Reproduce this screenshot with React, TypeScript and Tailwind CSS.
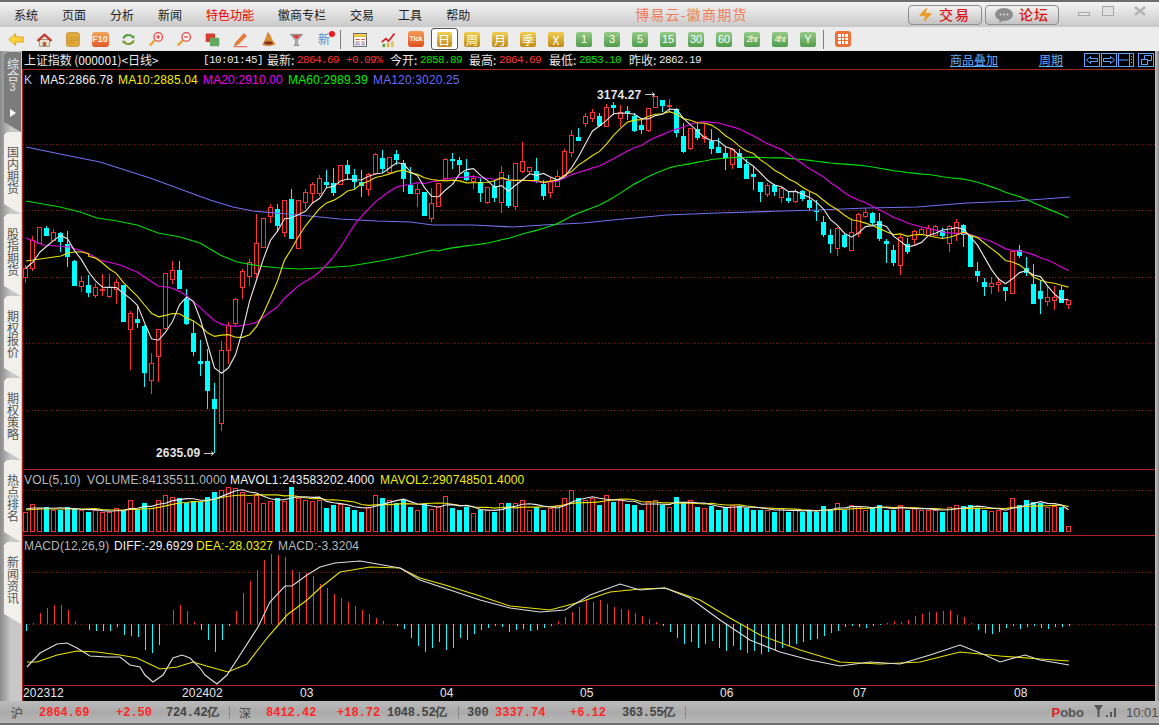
import { Zap } from "lucide-react";

type Candle = ["r" | "c", number, number, number, number];

const CJK = "font-['Noto_Sans_CJK_SC','Liberation_Sans',sans-serif]";
const RED = "#ff3232";
const CYAN = "#00ffff";

// kind, high, body top, body bottom, low (page pixels)
const candles: Candle[] = [
  ["r",265,268,277,283],["r",236,240,268,271],["r",227,227,243,243],["c",226,228,236,236],["r",229,232,240,240],
  ["c",232,233,242,252],["c",231,244,257,267],["c",260,261,286,286],["r",276,281,286,292],["c",275,285,293,297],
  ["r",283,287,295,298],["r",274,289,290,296],["r",274,287,296,298],["r",279,282,289,304],["c",285,285,322,322],
  ["r",311,313,329,370],["c",305,319,323,328],["c",325,326,373,387],["r",353,363,380,394],["r",329,329,356,382],
  ["r",273,273,328,330],["r",261,270,279,284],["c",261,270,289,289],["c",289,299,324,325],["c",321,333,352,356],
  ["c",340,361,364,376],["c",349,361,391,409],["c",383,399,409,453],["r",341,350,423,431],["r",322,325,350,364],
  ["r",298,299,323,326],["r",269,271,287,299],["r",259,262,276,286],["r",214,243,273,278],["r",218,218,247,248],
  ["r",204,207,216,223],["c",204,209,226,232],["r",200,200,232,237],["c",189,199,239,239],["r",200,200,248,248],
  ["r",189,192,202,209],["r",182,184,193,204],["r",175,178,193,196],["c",170,182,185,188],["c",168,183,193,196],
  ["r",165,165,184,184],["c",160,165,174,180],["c",169,175,182,189],["c",170,182,186,197],["r",173,174,189,196],
  ["r",153,154,173,173],["c",150,158,169,173],["r",157,157,172,173],["c",150,154,160,165],["c",160,163,179,192],
  ["c",167,185,194,194],["r",184,189,193,207],["c",192,192,216,216],["r",188,203,218,222],["r",183,183,206,206],
  ["r",158,159,178,178],["c",153,159,161,169],["c",157,160,165,173],["c",159,172,180,181],["r",175,178,181,189],
  ["c",178,182,193,202],["r",187,187,202,204],["c",180,186,198,202],["r",166,172,202,213],["c",175,181,206,208],
  ["r",163,163,206,210],["r",142,161,171,173],["r",167,167,171,175],["c",158,171,180,183],["c",180,184,196,200],
  ["r",177,181,192,198],["r",170,176,186,186],["r",149,151,175,175],["r",130,135,152,157],["c",128,137,141,141],
  ["r",113,116,123,127],["r",109,112,118,122],["c",113,116,126,127],["r",104,107,126,126],["c",102,105,108,115],
  ["r",105,112,118,127],["c",106,111,113,120],["c",113,116,131,132],["c",120,125,130,134],["r",108,108,130,132],
  ["r",96,96,107,107],["c",100,100,106,112],["r",99,105,106,112],["c",108,109,133,137],["c",123,136,152,153],
  ["r",128,128,148,150],["c",123,129,138,140],["r",124,136,138,143],["c",129,141,149,154],["c",138,147,153,153],
  ["c",146,153,158,170],["r",148,149,164,169],["c",149,153,168,168],["c",159,164,179,179],["c",167,174,177,190],
  ["c",182,182,192,202],["r",183,185,194,197],["c",184,185,192,196],["r",187,188,197,203],["c",192,198,201,203],
  ["r",189,191,201,203],["c",190,191,199,201],["c",192,200,208,210],["c",200,211,212,221],["c",216,222,235,237],
  ["c",229,235,244,253],["r",227,228,248,256],["c",234,235,247,248],["r",218,232,250,250],["r",213,214,233,237],
  ["r",208,212,216,218],["c",212,213,223,225],["c",213,221,239,241],["c",239,241,244,263],["c",245,250,263,266],
  ["r",235,237,265,275],["c",238,244,252,254],["r",230,231,239,245],["r",227,229,234,235],["r",225,228,235,236],
  ["r",225,226,235,236],["c",228,231,236,238],["r",225,226,243,252],["r",219,222,233,241],["c",224,225,235,247],
  ["c",235,235,267,267],["c",262,271,276,282],["c",278,282,287,296],["r",277,283,286,294],["r",277,282,284,292],
  ["c",287,287,291,301],["r",251,251,293,293],["c",245,250,256,258],["c",257,268,273,276],["c",264,284,304,304],
  ["c",280,291,299,314],["r",285,297,301,306],["r",286,297,300,310],["c",286,290,303,303],["r",300,300,304,309],
];

// tops of the volume bars (page pixels), bottom edge is y=532
const volumeTops = [
  512,504,508,507,510,510,507,509,510,512,510,512,512,508,511,500,510,503,508,500,
  495,497,498,503,501,502,497,492,490,487,488,492,503,495,503,501,498,501,487,498,
  500,501,500,508,505,504,507,510,512,507,495,498,500,503,500,507,510,504,509,506,
  496,508,510,507,513,510,510,512,503,503,503,500,510,507,510,508,505,498,490,498,
  500,498,505,495,502,500,504,505,510,501,500,505,507,497,503,500,507,508,506,510,
  507,505,506,508,510,510,510,512,508,512,510,512,510,512,506,509,503,510,505,506,
  510,508,505,510,510,505,510,508,510,510,510,512,507,505,506,505,508,510,511,510,
  512,498,505,500,502,503,507,506,507,526,
];

// MACD stick length above (+) or below (-) the zero line, in pixels
const macdSticks = [
  -7,1,11,16,19,19,14,3,0,-6,-7,-7,-7,-3,-11,-12,-13,-26,-29,-21,
  0,14,19,13,2,-6,-16,-28,-16,-2,13,31,43,54,64,70,69,67,54,52,
  51,48,40,36,30,26,22,18,14,10,6,3,0,-2,-5,-14,-22,-28,-24,-18,
  -26,-24,-14,-16,-10,-6,-4,-2,-3,-8,-6,-5,-7,-6,-4,-2,3,7,12,17,
  24,22,24,20,17,15,14,11,8,5,2,-2,-8,-14,-20,-18,-24,-20,-17,-24,
  -27,-22,-26,-29,-27,-30,-28,-26,-24,-22,-20,-18,-16,-15,-12,-9,-7,-3,-2,-3,
  -4,-2,-1,1,3,2,4,8,10,12,12,13,14,9,7,1,-6,-9,-10,-8,
  -4,-2,-5,-3,-2,-4,-5,-3,-3,-2,
];

const closes = candles.map((c) => (c[0] === "r" ? c[2] : c[3]));
const xOf = (i: number) => 25.5 + 7 * i;

function movingAverage(values: number[], n: number, lead: [number, number][]) {
  const pts: [number, number][] = [...lead];
  for (let i = n - 1; i < values.length; i++) {
    const slice = values.slice(i - n + 1, i + 1);
    pts.push([xOf(i), slice.reduce((a, b) => a + b, 0) / n]);
  }
  return pts;
}

const toPoints = (pts: [number, number][]) => pts.map((p) => p.join(",")).join(" ");

const ma5 = movingAverage(closes, 5, [[26, 268], [33, 262], [40, 252], [47, 246]]);
const ma10 = movingAverage(closes, 10, [[26, 261], [40, 259], [54, 257], [61, 256], [68, 253], [75, 252], [82, 252], [89, 254]]);
const ma20 = movingAverage(closes, 20, [[26, 238], [43, 245], [70, 247], [87, 253], [100, 260], [120, 265], [137, 272], [152, 282]]);
const ma60 = movingAverage(closes, 60, [
  [26, 201], [60, 207], [80, 212], [97, 218], [117, 221], [137, 225], [158, 233], [180, 237], [200, 243], [220, 255],
  [237, 262], [260, 266], [280, 268], [300, 269], [320, 268], [350, 266], [380, 261], [410, 255], [432, 250],
]);
const ma120: [number, number][] = [
  [26, 147], [60, 154], [100, 162], [150, 178], [180, 189], [210, 200], [233, 207], [253, 211], [287, 214], [320, 217],
  [340, 219], [377, 221], [410, 222], [433, 225], [473, 225], [513, 227], [543, 225], [583, 223], [623, 219], [667, 215],
  [717, 213], [783, 211], [817, 210], [867, 208], [917, 207], [967, 203], [1017, 201], [1057, 198], [1070, 197],
];

const volMa5 = movingAverage(volumeTops, 5, [[26, 509], [33, 508], [40, 508], [47, 508]]);
const volMa10 = movingAverage(volumeTops, 10, [[26, 510], [40, 509], [54, 509], [68, 509], [82, 509]]);

const diff: [number, number][] = [
  [27, 667], [40, 653], [57, 644], [67, 643], [77, 648], [90, 656], [107, 657], [120, 657], [130, 665], [140, 667],
  [145, 675], [153, 682], [163, 675], [173, 658], [182, 655], [190, 658], [200, 668], [205, 675], [217, 684], [227, 675],
  [240, 655], [258, 627], [270, 602], [285, 586], [292, 586], [307, 575], [320, 567], [335, 563], [360, 561], [400, 568],
  [420, 580], [450, 590], [480, 600], [510, 608], [540, 612], [565, 610], [590, 595], [620, 584], [640, 590], [665, 588],
  [690, 598], [720, 620], [750, 640], [780, 652], [810, 660], [840, 666], [870, 662], [900, 664], [930, 655], [960, 645],
  [985, 655], [1000, 662], [1025, 655], [1040, 660], [1069, 665],
];
const dea: [number, number][] = [
  [27, 662], [37, 662], [57, 655], [77, 651], [97, 652], [120, 655], [137, 658], [160, 669], [177, 667], [193, 662],
  [210, 667], [228, 672], [247, 664], [267, 638], [287, 615], [307, 600], [320, 588], [340, 572], [370, 567], [400, 568],
  [420, 578], [445, 585], [480, 596], [510, 606], [550, 610], [580, 602], [610, 592], [640, 589], [665, 588], [700, 600],
  [730, 618], [760, 635], [800, 650], [840, 662], [880, 664], [920, 662], [960, 652], [1000, 656], [1040, 659], [1069, 661],
];

function Grid({ ys }: { ys: number[] }) {
  return (
    <>
      {ys.map((y) => (
        <line key={y} x1={23} x2={1155} y1={y + 0.5} y2={y + 0.5} stroke="#8a1414" strokeDasharray="1 2" />
      ))}
    </>
  );
}

function Line({ pts, color }: { pts: [number, number][]; color: string }) {
  return <polyline points={toPoints(pts)} fill="none" stroke={color} strokeWidth={1.15} />;
}

function PriceChart() {
  return (
    <svg width={1132} height={399} viewBox="23 70 1132 399" className="block">
      <Grid ys={[144, 210, 277, 343, 410]} />
      <g shapeRendering="crispEdges">
        {candles.map((c, i) => {
          const x = xOf(i);
          const color = c[0] === "r" ? RED : CYAN;
          return (
            <g key={i}>
              <line x1={x} x2={x} y1={c[1]} y2={c[4]} stroke={color} />
              {c[0] === "r" ? (
                <rect x={x - 2} y={c[2] + 0.5} width={4} height={Math.max(c[3] - c[2], 1)} fill="#000" stroke={color} />
              ) : (
                <rect x={x - 2.5} y={c[2]} width={5} height={Math.max(c[3] - c[2], 1)} fill={color} />
              )}
            </g>
          );
        })}
      </g>
      <Line pts={ma120} color="#7070f0" />
      <Line pts={ma60} color="#00e000" />
      <Line pts={ma20} color="#e000e0" />
      <Line pts={ma10} color="#e8e000" />
      <Line pts={ma5} color="#e4e4e4" />
      <path d="M645 94.5h10m-3-2 3 2-3 2" fill="none" stroke="#c8c8c8" />
      <path d="M204 453.5h10m-3-2 3 2-3 2" fill="none" stroke="#c8c8c8" />
    </svg>
  );
}

function VolumeChart() {
  return (
    <svg width={1132} height={65} viewBox="23 470 1132 65" className="block">
      <Grid ys={[490]} />
      <g shapeRendering="crispEdges">
        {volumeTops.map((top, i) => {
          const x = xOf(i);
          return candles[i][0] === "r" ? (
            <rect key={i} x={x - 2} y={top + 0.5} width={4} height={531 - top} fill="#000" stroke={RED} />
          ) : (
            <rect key={i} x={x - 2.5} y={top} width={5} height={532 - top} fill={CYAN} />
          );
        })}
      </g>
      <Line pts={volMa10} color="#e8e000" />
      <Line pts={volMa5} color="#e8e8e8" />
    </svg>
  );
}

function MacdChart() {
  return (
    <svg width={1132} height={149} viewBox="23 536 1132 149" className="block">
      <Grid ys={[572, 624]} />
      <g shapeRendering="crispEdges">
        {macdSticks.map((v, i) =>
          v === 0 ? null : (
            <line
              key={i}
              x1={xOf(i) + 1}
              x2={xOf(i) + 1}
              y1={624}
              y2={624 - v}
              stroke={v > 0 ? RED : CYAN}
            />
          ),
        )}
      </g>
      <Line pts={dea} color="#e8e000" />
      <Line pts={diff} color="#dcdcdc" />
    </svg>
  );
}

function Tab({ label }: { label: string }) {
  return (
    <div className="w-[17px] h-[82px] ml-[4px] flex flex-col items-center pt-[14px] bg-[#f1f0ea] text-[#555] [clip-path:polygon(3px_0,100%_0,100%_100%,0_calc(100%-10px),0_3px)]">
      <span className={`${CJK} text-[12px] leading-[12px] [writing-mode:vertical-rl]`}>{label}</span>
    </div>
  );
}

function ActiveTab() {
  return (
    <div className="w-[17px] h-[80px] ml-[4px] flex flex-col items-center pt-[6px] bg-[#7c7c7c] text-[#e8e8e8] [clip-path:polygon(3px_0,100%_0,100%_100%,0_calc(100%-10px),0_3px)]">
      <span className={`${CJK} text-[12px] leading-[12px] [writing-mode:vertical-rl]`}>综合</span>
      <span className="font-['Liberation_Sans',sans-serif] text-[11px] leading-[11px]">3</span>
      <svg width={6} height={8} viewBox="0 0 6 8" className="mt-[16px] ml-[1px]">
        <path d="M0 0l6 4-6 4z" fill="#fff" />
      </svg>
    </div>
  );
}

function GoldBtn({ label }: { label: string }) {
  return (
    <div className="w-7 flex justify-center">
      <span
        className={`${CJK} w-[16px] h-[15px] rounded-[2px] bg-gradient-to-b from-[#f0cf50] to-[#bf8a12] text-white text-[12px] leading-[15px] text-center`}
      >
        {label}
      </span>
    </div>
  );
}

function GreenBtn({ label }: { label: string }) {
  const small = label.length > 2;
  return (
    <div className="w-7 flex justify-center">
      <span
        className={`w-[16px] h-[15px] rounded-[2px] bg-gradient-to-b from-[#96cb88] to-[#4f9c4c] text-white leading-[15px] text-center font-['Liberation_Sans',sans-serif] whitespace-nowrap ${
          small ? "text-[9px] tracking-[-0.6px]" : "text-[11px]"
        }`}
      >
        {label}
      </span>
    </div>
  );
}

function Ico({ children }: { children: React.ReactNode }) {
  return (
    <div className="w-7 flex justify-center">
      <svg width={17} height={17} viewBox="0 0 20 20">
        {children}
      </svg>
    </div>
  );
}

function Toolbar() {
  return (
    <div className="h-[24px] bg-[#ececec] flex items-center pl-[2px] shrink-0">
      <Ico>
        <path d="M1 10 9 3v4h9v6H9v4z" fill="#fcd23e" stroke="#d99b10" />
      </Ico>
      <Ico>
        <path d="M4 10h12v8H4z" fill="#e8e0d0" stroke="#a08060" />
        <path d="M8 18v-5h4v5z" fill="#b06030" />
        <path d="M1 11 10 3l9 8-2 1-7-6-7 6z" fill="#d8352a" stroke="#902010" strokeWidth="0.5" />
      </Ico>
      <Ico>
        <rect x="3" y="2" width="15" height="16" rx="2" fill="#e2a93c" stroke="#c08a2a" />
        <path d="M5 8h11M5 11h11M5 14h8" stroke="#c8962e" />
      </Ico>
      <div className="w-7 flex justify-center">
        <span className="w-[17px] h-[15px] rounded-[3px] bg-gradient-to-b from-[#f3a45c] to-[#e0582a] text-[#fff0d8] text-[9px] font-bold leading-[15px] text-center font-['Liberation_Sans',sans-serif]">
          F10
        </span>
      </div>
      <Ico>
        <path d="M4 9a6 5 0 0 1 11-2" fill="none" stroke="#5aa048" strokeWidth="2.5" />
        <path d="M16 11a6 5 0 0 1-11 2" fill="none" stroke="#7a9a30" strokeWidth="2.5" />
        <path d="M13 8l4 1 0-4z" fill="#5aa048" />
        <path d="M7 12l-4-1 0 4z" fill="#7a9a30" />
      </Ico>
      <Ico>
        <circle cx="12" cy="7" r="5" fill="#fff4f0" stroke="#e0484a" strokeWidth="1.5" />
        <path d="M9.5 7h5M12 4.5v5" stroke="#e0484a" strokeWidth="1.5" />
        <path d="M8 11l-6 6" stroke="#eea020" strokeWidth="2.5" />
      </Ico>
      <Ico>
        <circle cx="12" cy="7" r="5" fill="#fff4f0" stroke="#e0484a" strokeWidth="1.5" />
        <path d="M9.5 7h5" stroke="#e0484a" strokeWidth="1.5" />
        <path d="M8 11l-6 6" stroke="#eea020" strokeWidth="2.5" />
      </Ico>
      <Ico>
        <rect x="2" y="3" width="11" height="10" rx="1" fill="#d83a30" />
        <rect x="7" y="8" width="11" height="10" rx="1" fill="#62a860" />
      </Ico>
      <Ico>
        <path d="M4 14 14 3l3 3L7 16l-4 1z" fill="#ee7a30" stroke="#c84a20" strokeWidth="0.6" />
        <path d="M2 18.5h16" stroke="#e03a20" />
      </Ico>
      <Ico>
        <path d="M9 2c2 0 3 3 4 6s3 6 5 7c-4 3-11 3-15 1 2-3 4-7 6-14z" fill="#d89030" stroke="#a86020" strokeWidth="0.5" />
        <ellipse cx="10" cy="14" rx="5" ry="2" fill="#8a3020" />
      </Ico>
      <Ico>
        <path d="M3 4h14l-6 7v4l2 2H7l2-2v-4z" fill="#c8c8c8" stroke="#777" />
        <path d="M5 5h10l-5 5z" fill="#d83a3a" />
      </Ico>
      <div className="w-7 relative flex justify-center">
        <span className={`${CJK} text-[12px] leading-[20px] text-[#4a90d8]`}>新</span>
        <span className="absolute right-[3px] top-[2px] w-[6px] h-[6px] rounded-full bg-[#f01818]" />
      </div>
      <div className="w-px h-[19px] bg-[#808080] ml-[2px] mr-[5px]" />
      <Ico>
        <rect x="2" y="3" width="15" height="15" fill="#fff" stroke="#444" />
        <path d="M2 5.5h15" stroke="#f0c030" strokeWidth="3" />
        <path d="M4 10h5M11 10h4M4 13h5M11 13h4" stroke="#d03030" />
        <path d="M4 15.5h5M11 15.5h4" stroke="#2050c0" />
      </Ico>
      <Ico>
        <path d="M2 13l5-4 3 3 7-9" fill="none" stroke="#d82020" strokeWidth="2" />
        <path d="M3 15h3v4H3z" fill="#60a040" />
        <path d="M8 14h3v5H8z" fill="#e0b030" />
        <path d="M13 12h3v7h-3z" fill="#e8c050" />
      </Ico>
      <div className="w-7 flex justify-center">
        <span className="w-[16px] h-[16px] rounded-[3px] bg-gradient-to-b from-[#f49a50] to-[#e04c20] text-white text-[7px] font-bold leading-[16px] font-['Liberation_Sans',sans-serif] text-center tracking-[-0.2px]">
          Tick
        </span>
      </div>
      <div className="w-7 flex justify-center">
        <div className="w-[27px] h-[22px] border border-[#555] rounded-[3px] bg-white flex items-center justify-center">
          <span
            className={`${CJK} w-[15px] h-[15px] rounded-[2px] bg-gradient-to-b from-[#f0cf50] to-[#bf8a12] text-white text-[12px] leading-[15px] text-center`}
          >
            日
          </span>
        </div>
      </div>
      <GoldBtn label="周" />
      <GoldBtn label="月" />
      <GoldBtn label="季" />
      <GoldBtn label="X" />
      {["1", "3", "5", "15", "30", "60", "2hr", "4hr", "Y"].map((t) => (
        <GreenBtn key={t} label={t} />
      ))}
      <div className="w-px h-[19px] bg-[#808080] ml-[1px] mr-[5px]" />
      <div className="w-7 flex justify-center">
        <svg width={16} height={16} viewBox="0 0 16 16">
          <rect width="16" height="16" rx="3" fill="#ee7038" />
          <rect x="3" y="3" width="10" height="10" fill="#fff" />
          <path d="M3 6.5h10M3 9.5h10M6.5 3v10M9.5 3v10" stroke="#ee7038" />
        </svg>
      </div>
    </div>
  );
}

function MenuBar() {
  const items = ["系统", "页面", "分析", "新闻", "特色功能", "徽商专栏", "交易", "工具", "帮助"];
  return (
    <div className="h-[25px] bg-gradient-to-b from-[#f4f4f4] to-[#c9c9c9] flex items-center shrink-0 relative">
      <div className={`${CJK} pl-[14px] flex gap-6 text-[12px] text-[#222]`}>
        {items.map((m) => (
          <span key={m} className={m === "特色功能" ? "text-[#f00000]" : ""}>
            {m}
          </span>
        ))}
      </div>
      <span className={`${CJK} ml-[165px] text-[14px] tracking-[1.2px] text-[#f07c58]`}>博易云-徽商期货</span>
      <div className="ml-[160px] flex gap-[3px]">
        <div className="w-[74px] h-[20px] rounded-[4px] border border-[#8c8c8c] bg-gradient-to-b from-[#f2f2f2] to-[#c4c4c4] flex items-center justify-center gap-[6px]">
          <Zap size={15} className="text-[#ee9a20]" fill="#ee9a20" strokeWidth={1} />
          <span className={`${CJK} text-[14px] font-medium tracking-[2px] text-[#d81818]`}>交易</span>
        </div>
        <div className="w-[74px] h-[20px] rounded-[4px] border border-[#8c8c8c] bg-gradient-to-b from-[#f2f2f2] to-[#c4c4c4] flex items-center justify-center gap-[5px]">
          <svg width={20} height={16} viewBox="0 0 20 16">
            <ellipse cx="10" cy="7.5" rx="9" ry="6.5" fill="#8c8c8c" />
            <path d="M6 12l-1 4 5-3z" fill="#8c8c8c" />
            <circle cx="6.5" cy="7.5" r="1" fill="#ddd" />
            <circle cx="10" cy="7.5" r="1" fill="#ddd" />
            <circle cx="13.5" cy="7.5" r="1" fill="#ddd" />
          </svg>
          <span className={`${CJK} text-[14px] font-medium tracking-[1px] text-[#d81818]`}>论坛</span>
        </div>
      </div>
      <div className="ml-[19px] flex items-start h-[25px] pt-[3px] text-[#a8a8a8]">
        <span className="w-[12px] h-[4px] border border-[#a8a8a8] bg-[#e8e8e8] mt-[7px]" />
        <span className="w-[12px] h-[10px] border border-[#a8a8a8] bg-[#e0e0e0] ml-[12px] mt-[1px]" />
        <svg width={12} height={10} viewBox="0 0 12 10" className="ml-[20px] mt-[1px]">
          <path d="M1 1l10 8M11 1 1 9" stroke="#b4b4b4" strokeWidth="2.4" />
        </svg>
      </div>
    </div>
  );
}

function InfoRow() {
  const num = "font-['Liberation_Mono',monospace] text-[11px] tracking-[-0.6px]";
  const cjk = `${CJK} w-[30px] text-[12px] text-[#e8e8e8]`;
  return (
    <div className="h-[19px] border-b border-[#a02818] flex items-center pl-[2px] shrink-0 text-white">
      <span className={`${CJK} text-[12px] text-[#e8e8e8] w-[179px] tracking-[-0.1px] whitespace-nowrap`}>上证指数 (000001)&lt;日线&gt;</span>
      <span className={`${num} w-[64px] text-[#e8e8e8]`}>[10:01:45]</span>
      <span className={cjk}>最新:</span>
      <span className={`${num} w-[49px] text-[#ff3232]`}>2864.69</span>
      <span className={`${num} w-[44px] text-[#ff3232]`}>+0.09%</span>
      <span className={cjk}>今开:</span>
      <span className={`${num} w-[49px] text-[#00e000]`}>2858.89</span>
      <span className={cjk}>最高:</span>
      <span className={`${num} w-[50px] text-[#ff3232]`}>2864.69</span>
      <span className={cjk}>最低:</span>
      <span className={`${num} w-[50px] text-[#00e000]`}>2853.10</span>
      <span className={cjk}>昨收:</span>
      <span className={`${num} text-[#e8e8e8]`}>2862.19</span>
      <div className={`${CJK} ml-auto flex items-center text-[12px] text-[#62aeff] underline`}>
        <span>商品叠加</span>
        <span className="ml-[41px]">周期</span>
      </div>
      <div className="ml-[21px] flex gap-px mr-[1px] text-[#5aa5ff]">
        <svg width={16} height={14} viewBox="0 0 16 14">
          <rect x="0.5" y="0.5" width="15" height="13" fill="none" stroke="currentColor" />
          <path d="M2.5 7l4-3.5V5.5h7v3h-7v2z" fill="none" stroke="currentColor" />
        </svg>
        <svg width={16} height={14} viewBox="0 0 16 14">
          <rect x="0.5" y="0.5" width="15" height="13" fill="none" stroke="currentColor" />
          <path d="M13.5 7l-4-3.5V5.5h-7v3h7v2z" fill="none" stroke="currentColor" />
        </svg>
        <svg width={16} height={14} viewBox="0 0 16 14">
          <rect x="0.5" y="0.5" width="15" height="13" fill="none" stroke="currentColor" />
          <path d="M0.5 7h10M11.5.5v13M13.5 3v1M13.5 6v1M13.5 9v1" fill="none" stroke="currentColor" />
        </svg>
        <svg width={16} height={14} viewBox="0 0 16 14" className="ml-[3px]">
          <rect x="0.5" y="0.5" width="15" height="13" fill="none" stroke="currentColor" />
          <rect x="3.5" y="6.5" width="6" height="5" fill="none" stroke="currentColor" />
          <path d="M6.5 6.5v-4h7v5h-4" fill="none" stroke="currentColor" />
        </svg>
      </div>
    </div>
  );
}

function StatusBar() {
  const num = "font-['Liberation_Mono',monospace] text-[12px] font-bold";
  return (
    <div className="h-[24px] bg-gradient-to-b from-[#bcbcbc] via-[#aaaaaa] to-[#b8b8b8] border-b-2 border-[#707070] flex items-center pl-[11px] pt-[1px] text-[#444] shrink-0">
      <span className={`${CJK} w-[28px] text-[12px]`}>沪</span>
      <span className={`${num} w-[77px] text-[#ff2828]`}>2864.69</span>
      <span className={`${num} w-[50px] text-[#ff2828]`}>+2.50</span>
      <span className={`${num} w-[63px] tracking-[-0.3px]`}>724.42亿</span>
      <span className="w-px h-[13px] bg-[#888] mr-[9px]" />
      <span className={`${CJK} w-[27px] text-[12px]`}>深</span>
      <span className={`${num} w-[71px] text-[#ff2828]`}>8412.42</span>
      <span className={`${num} w-[50px] text-[#ff2828]`}>+18.72</span>
      <span className={`${num} w-[71px] tracking-[-0.3px]`}>1048.52亿</span>
      <span className="w-px h-[13px] bg-[#888] mr-[8px]" />
      <span className={`${num} w-[28px]`}>300</span>
      <span className={`${num} w-[75px] text-[#ff2828]`}>3337.74</span>
      <span className={`${num} w-[52px] text-[#ff2828]`}>+6.12</span>
      <span className={`${num} w-[63px] tracking-[-0.3px]`}>363.55亿</span>
      <span className="w-px h-[13px] bg-[#888]" />
      <span className="ml-auto font-['Liberation_Sans',sans-serif] font-bold text-[13px] text-[#555]">
        <span className="text-[#e02020]">P</span>obo
      </span>
      <svg width={24} height={14} viewBox="0 0 24 14" className="ml-[9px] -mt-[3px] text-[#555]">
        <path d="M1 1h9L6.5 6v7h-2V6z" fill="currentColor" />
        <path d="M13 11h2v2h-2zM17 8h2v5h-2zM21 4h2v9h-2z" fill="currentColor" />
      </svg>
      <span className="ml-[9px] w-[33px] font-['Liberation_Sans',sans-serif] text-[13px] text-[#505050]">10:01</span>
    </div>
  );
}

export default function App() {
  const latin = "font-['Liberation_Sans',sans-serif] text-[12px] tracking-[0.15px] whitespace-nowrap leading-[16px]";
  const ticks: [string, number][] = [
    ["202312", 23], ["202402", 182], ["03", 300], ["04", 440], ["05", 580], ["06", 720], ["07", 853], ["08", 1014],
  ];
  return (
    <div className="w-[1159px] h-[725px] overflow-hidden flex flex-col bg-[#c6c6c6]">
      <div className="h-[2px] bg-[#6d6d6d] shrink-0" />
      <MenuBar />
      <Toolbar />
      <div className="h-[650px] flex shrink-0">
        <div className="w-[22px] shrink-0 bg-gradient-to-r from-[#8c8c8c] via-[#c8c8c8] to-[#c8c8c8] pt-[1px]">
          <ActiveTab />
          <Tab label="国内期货" />
          <Tab label="股指期货" />
          <Tab label="期权报价" />
          <Tab label="期权策略" />
          <Tab label="热点排名" />
          <Tab label="新闻资讯" />
        </div>
        <div className="w-[1133px] bg-black flex flex-col shrink-0">
          <InfoRow />
          <div className="h-[399px] border-l border-[#b02020] relative shrink-0">
            <PriceChart />
            <div className={`${latin} absolute left-[1px] top-[2px] flex`}>
              <span className="w-[16px] text-[#a8c8ff]">K</span>
              <span className="w-[78px] text-[#f0f0f0]">MA5:2866.78</span>
              <span className="w-[85px] text-[#f0f000]">MA10:2885.04</span>
              <span className="w-[85px] text-[#f000f0]">MA20:2910.00</span>
              <span className="w-[85px] text-[#00f000]">MA60:2989.39</span>
              <span className="text-[#6a6af8]">MA120:3020.25</span>
            </div>
            <span className={`${latin} absolute left-[574px] top-[17px] font-bold text-[#e4e4e4]`}>3174.27</span>
            <span className={`${latin} absolute left-[133px] top-[375px] font-bold text-[#e4e4e4]`}>2635.09</span>
          </div>
          <div className="h-[66px] border-l border-t border-[#b02020] relative shrink-0">
            <VolumeChart />
            <div className={`${latin} absolute left-[1px] top-[2px] flex`}>
              <span className="w-[63px] text-[#b8b8b8]">VOL(5,10)</span>
              <span className="w-[143px] text-[#b8b8b8]">VOLUME:84135511.0000</span>
              <span className="w-[150px] text-[#f0f0f0]">MAVOL1:243583202.4000</span>
              <span className="text-[#f0f000]">MAVOL2:290748501.4000</span>
            </div>
          </div>
          <div className="h-[150px] border-l border-t border-[#b02020] relative shrink-0">
            <MacdChart />
            <div className={`${latin} absolute left-[1px] top-[2px] flex`}>
              <span className="w-[90px] text-[#b8b8b8]">MACD(12,26,9)</span>
              <span className="w-[82px] text-[#f0f0f0]">DIFF:-29.6929</span>
              <span className="w-[82px] text-[#f0f000]">DEA:-28.0327</span>
              <span className="text-[#b8b8b8]">MACD:-3.3204</span>
            </div>
          </div>
          <div className="h-[16px] border-l border-t border-[#b02020] relative shrink-0">
            {ticks.map(([t, x]) => (
              <span key={t} className={`${latin} absolute top-[-1px] text-[11px] text-[#e8e8e8]`} style={{ left: x - 23 }}>
                {t}
              </span>
            ))}
          </div>
        </div>
        <div className="w-[4px] shrink-0 bg-gradient-to-r from-[#c8c8c8] to-[#8c8c8c]" />
      </div>
      <StatusBar />
    </div>
  );
}
